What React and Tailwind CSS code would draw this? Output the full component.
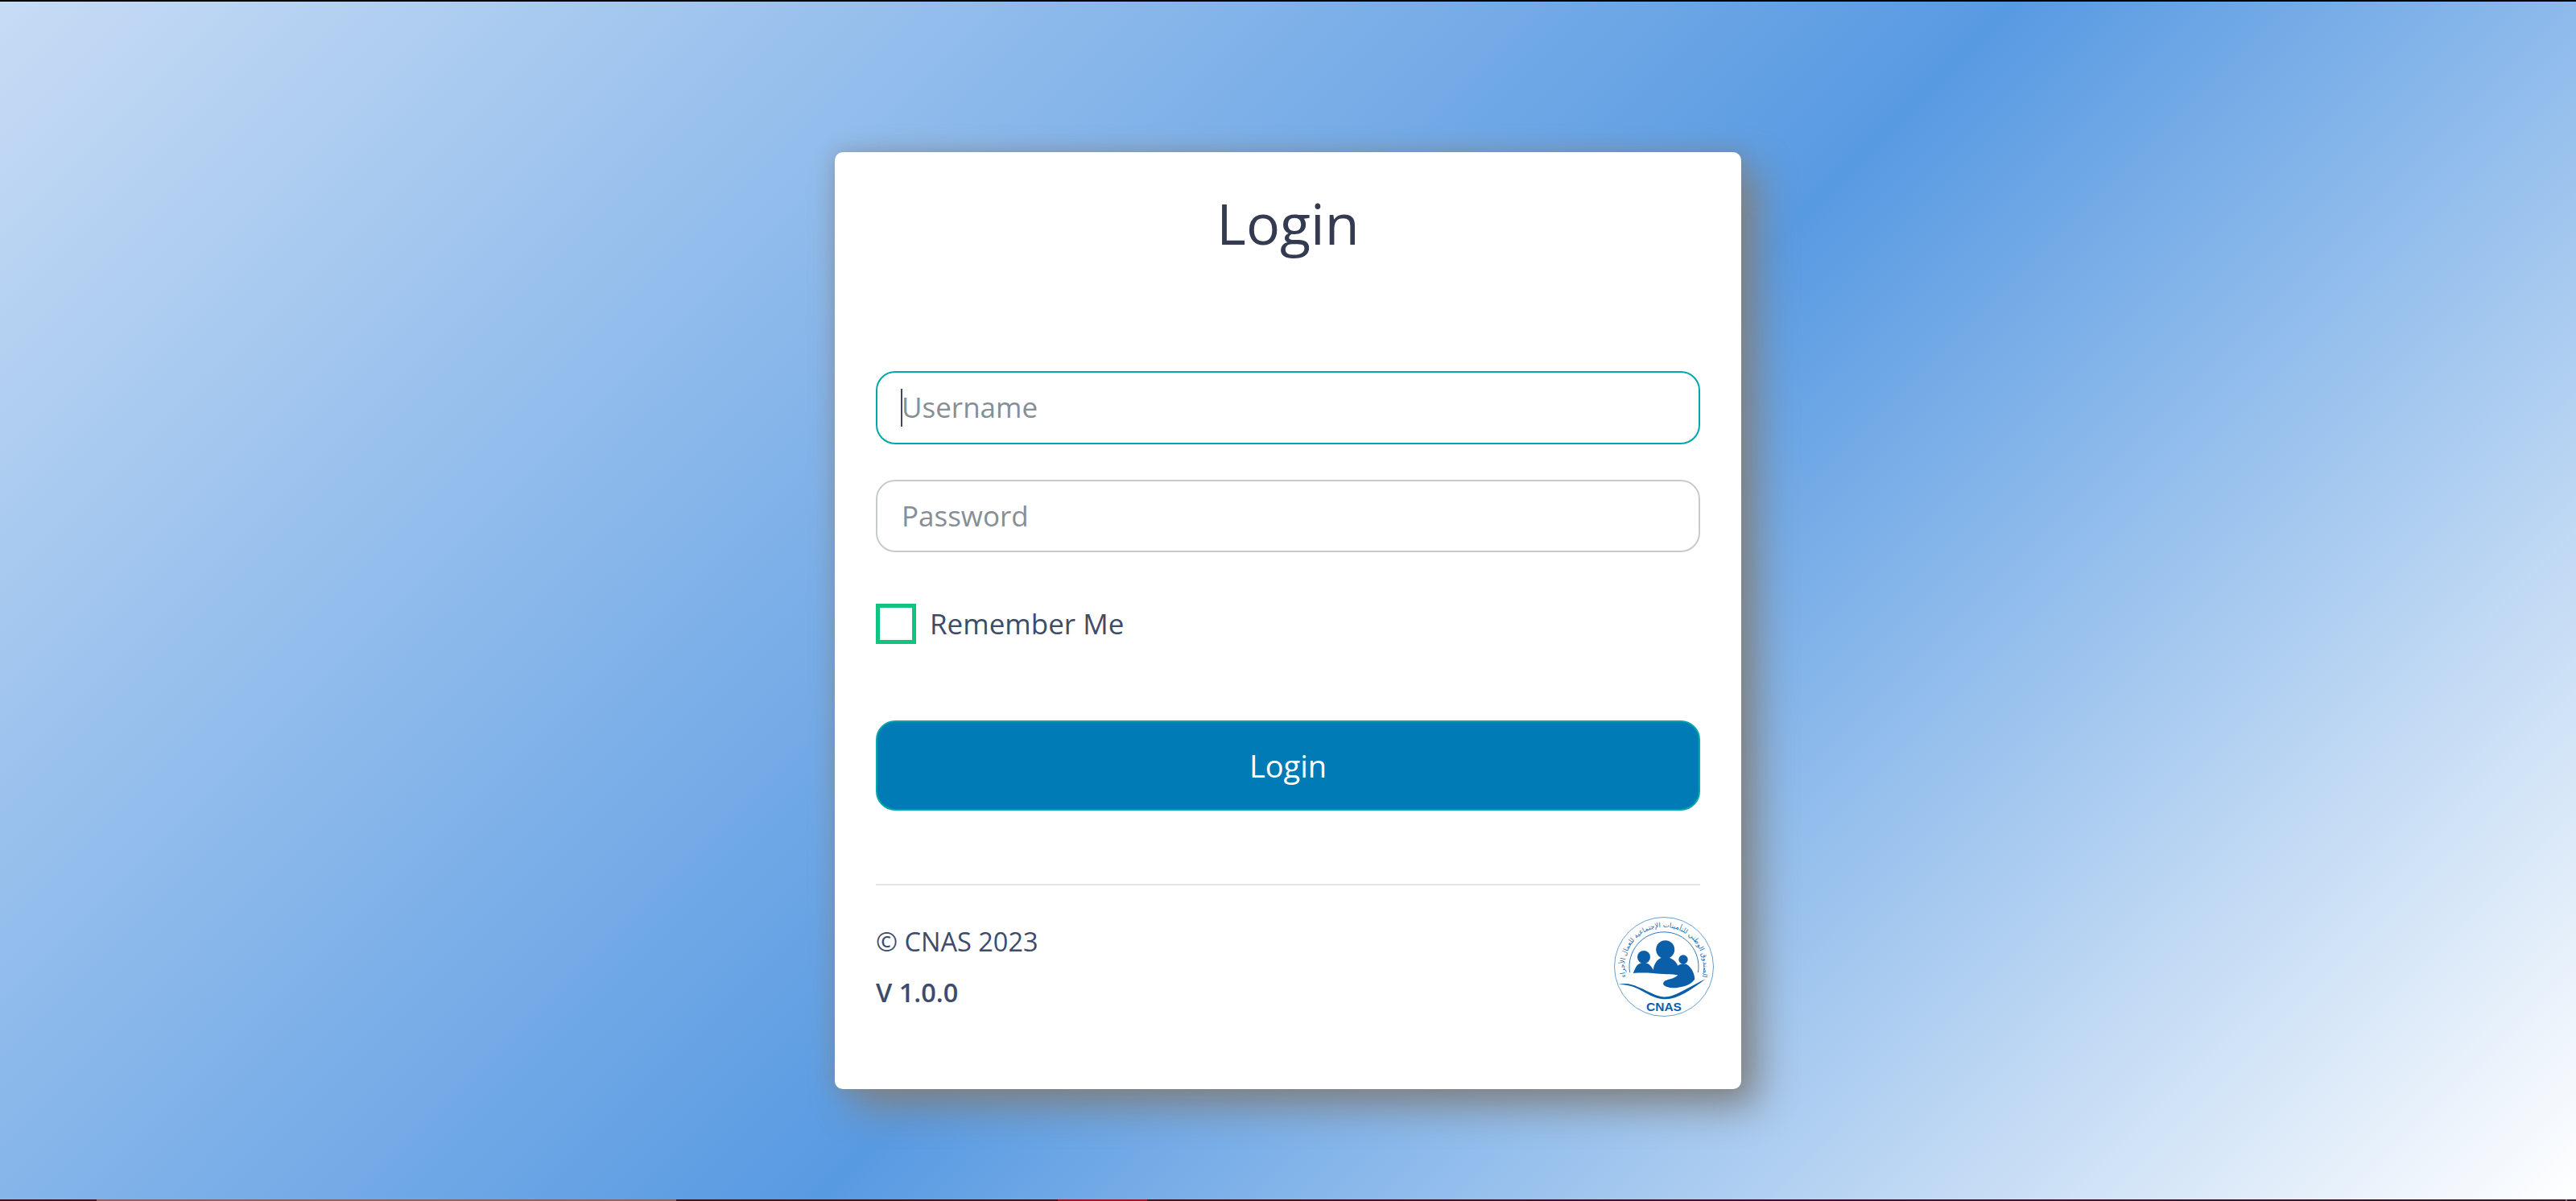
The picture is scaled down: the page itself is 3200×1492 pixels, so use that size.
import React from 'react';

const font = "font-['Open_Sans','Noto_Sans',sans-serif]";

const Logo = () => (
  <svg viewBox="0 0 130 130" className="w-[130px] h-[130px] shrink-0 -mr-[20px]">
    <defs>
      <path id="arc" d="M 17.8 78 A 49 49 0 1 1 112.2 78" />
    </defs>
    <circle cx="65" cy="65" r="61.5" fill="none" stroke="#3f87c6" strokeWidth="0.8" />
    <text fontSize="8.4" fill="#1a68ad" fontFamily="'DejaVu Sans', sans-serif">
      <textPath href="#arc" startOffset="50%" textAnchor="middle">الصندوق الوطني للتأمينات الإجتماعية للعمال الأجراء</textPath>
    </text>
    <path d="M 22.6 72 A 43 43 0 1 1 107.4 72" fill="none" stroke="#1a68ad" strokeWidth="0.9" />
    <circle cx="40" cy="53" r="8" fill="#0b5fa9" />
    <circle cx="66.7" cy="43.7" r="11.5" fill="#0b5fa9" />
    <circle cx="89" cy="56" r="5.7" fill="#0b5fa9" />
    <path d="M 26.7 73 C 29 69 30 60 40 60 C 46 60 49 64 51.7 68.7 C 53 60 58 53 66.7 53 C 74 53 80 58 82.3 63.7 C 85 61 92 60 96 64 C 101 69 103 75 103.3 80.3 C 100 85 97 87 91.7 88.7 C 85 90.5 79 92 73.3 91 C 68 90 63 88 64.3 85.3 C 65 82 68 82 70 81 C 75 80 80 78 82.3 75.3 C 76 74 62 74.5 51.7 73 C 44 72.5 34 72 26.7 73 Z" fill="#0b5fa9" />
    <path d="M 8.3 87 C 20 84 28 88 35 91 C 45 95 55 102 65 102.5 C 78 103 90 93 116.7 80.3 C 98 94 82 106 65 105.2 C 52 104.5 44 98 34 93 C 26 89 18 87 8.3 87 Z" fill="#0b5fa9" />
    <text x="65" y="119.7" textAnchor="middle" fontSize="15.5" fontWeight="700" fill="#0b5fa9" fontFamily="'Liberation Sans', sans-serif">CNAS</text>
  </svg>
);

const App = () => {
  return (
    <div className={`h-screen flex flex-col overflow-hidden ${font}`}>
      {/* top edge */}
      <div className="h-[2px] bg-black shrink-0" />

      <div className="flex-1 flex items-start justify-center pt-[187px] bg-[linear-gradient(135deg,#c7dcf5_0%,#589ae2_53.5%,#ffffff_100%)]">
        <div className="w-[1126px] h-[1164px] bg-white rounded-[10px] px-[51px] pt-[39px] shadow-[20px_20px_50px_#808080,0_0_20px_rgba(128,128,128,0.45)] flex flex-col">
          <h1 className="text-[70px] leading-[98px] text-center text-[#343a50] font-normal">Login</h1>

          <div className="mt-[135px] flex flex-col gap-[44px]">
            <div className="h-[91px] rounded-[24px] border-2 border-[#00a8ab] flex items-center pl-[30px] text-[35px] text-[#868e96] relative">
              <span className="w-[2px] h-[47px] bg-[#3f4860] absolute left-[29px] top-[20px]" />
              Username
            </div>
            <div className="h-[90px] rounded-[24px] border-2 border-[#c6cbd0] flex items-center pl-[30px] text-[35px] text-[#868e96]">
              Password
            </div>
          </div>

          <div className="mt-[64px] flex items-center gap-[17px]">
            <div className="w-[50px] h-[50px] border-[5px] border-[#10c480]" />
            <span className="text-[35px] leading-[50px] text-[#3e4c6b]">Remember Me</span>
          </div>

          <button className="mt-[95px] h-[112px] w-full rounded-[24px] bg-[#007bb6] border-2 border-[#00a8ab] text-white text-[38px]">
            Login
          </button>

          <hr className="mt-[91px] border-0 h-[2px] bg-[#e5e5e5]" />

          <div className="mt-[36px] flex justify-between items-start">
            <div className="pt-[12px] text-[#3e4c6b]">
              <p className="text-[32.5px] leading-[44px]">© CNAS 2023</p>
              <p className="text-[32.5px] leading-[44px] font-semibold mt-[19px]">V 1.0.0</p>
            </div>
            <Logo />
          </div>
        </div>
      </div>

      {/* bottom edge */}
      <div className="h-[2px] shrink-0 flex bg-[#3a1629]">
        <div className="w-[120px]" />
        <div className="w-[720px] bg-[#8c6068]" />
        <div className="w-[474px]" />
        <div className="w-[111px] bg-[#9a1830]" />
        <div className="w-[1762px]" />
        <div className="w-[2px] bg-[#8c6068]" />
      </div>
    </div>
  );
};

export default App;
